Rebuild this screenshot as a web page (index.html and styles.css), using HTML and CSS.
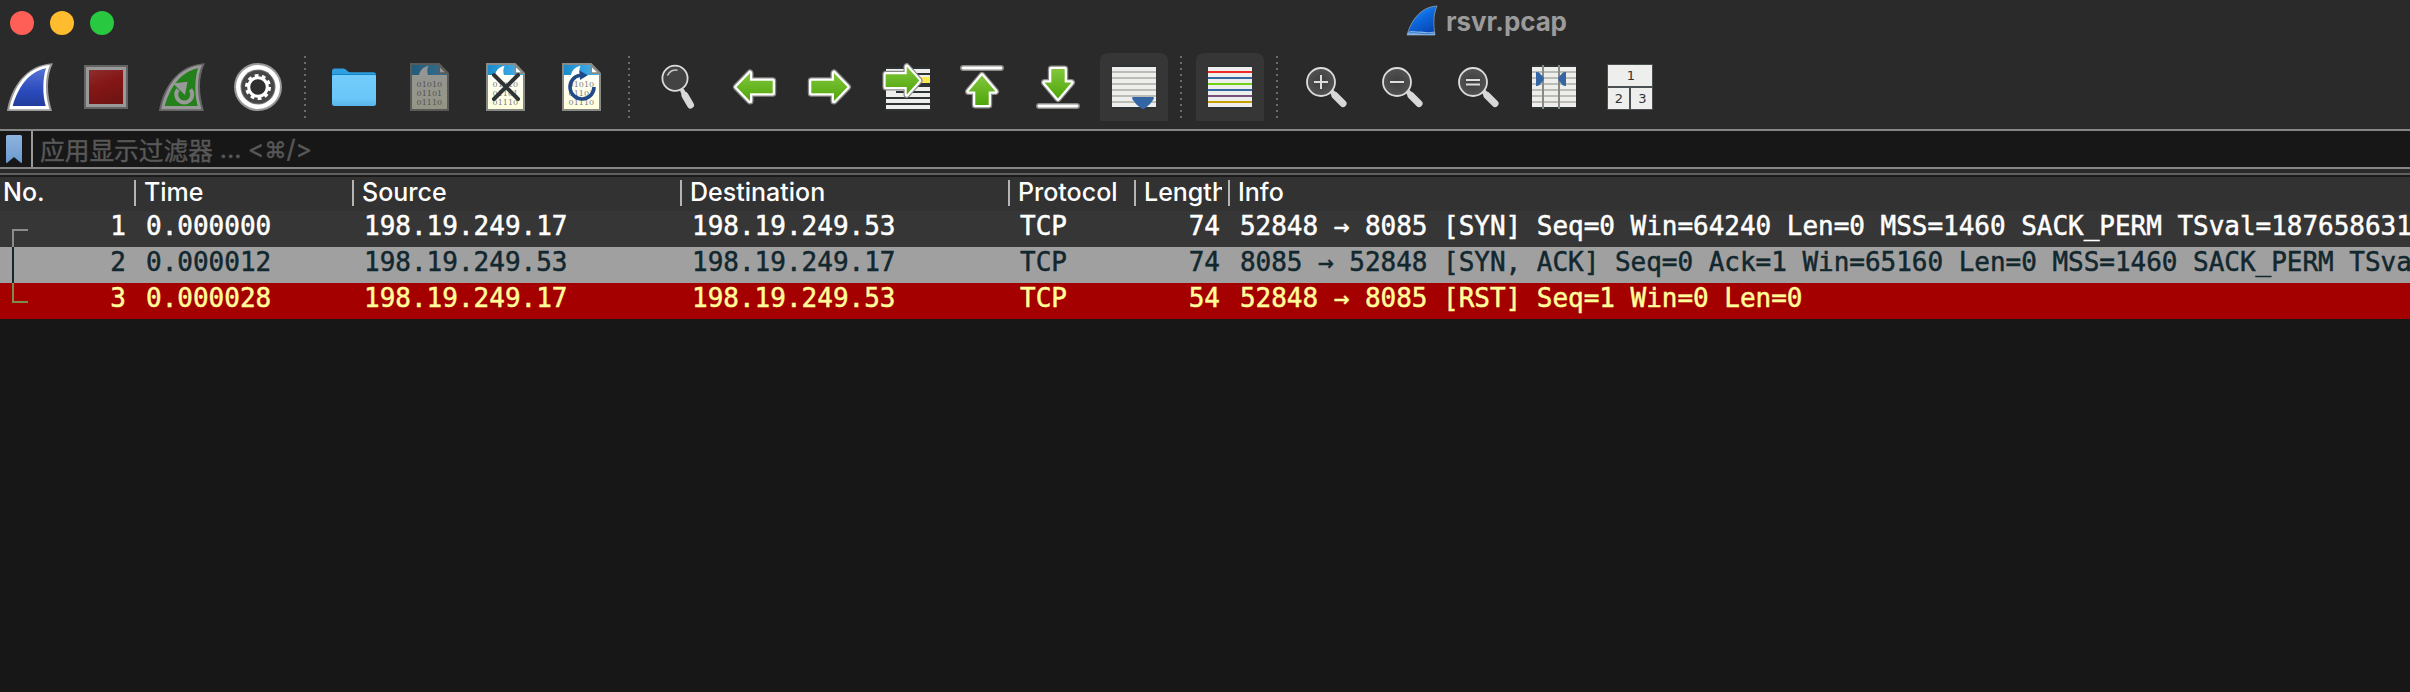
FILE: index.html
```html
<!DOCTYPE html>
<html lang="zh-CN">
<head>
<meta charset="utf-8">
<title>rsvr.pcap</title>
<link rel="stylesheet" href="styles.css">
</head>
<body>
<svg class="defs" width="0" height="0" aria-hidden="true">
  <defs>
    <linearGradient id="blue" x1="0" y1="0" x2="0" y2="1"><stop offset="0" stop-color="#5672d6"/><stop offset=".6" stop-color="#2b4bbd"/><stop offset="1" stop-color="#223c9c"/></linearGradient>
    <linearGradient id="title-blue" x1="0" y1="0" x2=".6" y2="1"><stop offset="0" stop-color="#3f9df5"/><stop offset=".5" stop-color="#0c6be0"/><stop offset="1" stop-color="#0846b4"/></linearGradient>
    <linearGradient id="red" x1="0" y1="0" x2=".4" y2="1"><stop offset="0" stop-color="#8c2f2f"/><stop offset=".5" stop-color="#851616"/><stop offset="1" stop-color="#731414"/></linearGradient>
    <linearGradient id="green" x1="0" y1="0" x2="0" y2="1"><stop offset="0" stop-color="#82c63c"/><stop offset="1" stop-color="#4ea60a"/></linearGradient>
    <linearGradient id="folder" x1="0" y1="0" x2="0" y2="1"><stop offset="0" stop-color="#72cdfb"/><stop offset=".75" stop-color="#6ac6f8"/><stop offset="1" stop-color="#58b4ea"/></linearGradient>
    <linearGradient id="sky" x1="0" y1="0" x2="1" y2="0"><stop offset="0" stop-color="#1c8bcb"/><stop offset="1" stop-color="#45b5f0"/></linearGradient>
    <linearGradient id="paper" x1="0" y1="0" x2="0" y2="1"><stop offset="0" stop-color="#ffffff"/><stop offset="1" stop-color="#ffffdf"/></linearGradient>
    <linearGradient id="mark" x1="0" y1="0" x2="0" y2="1"><stop offset="0" stop-color="#8db3de"/><stop offset="1" stop-color="#6c9bd0"/></linearGradient>
    <radialGradient id="lens"><stop offset="0" stop-color="#3e3e3e"/><stop offset="1" stop-color="#525252"/></radialGradient>
    <g id="sheet">
      <path d="M4 0H33.5L43 10V48H4Z" fill="#888a85"/>
      <path d="M6 2H32.5L41 10.5V46H6Z" fill="url(#paper)"/>
      <path d="M6 2H32.5L41 10.500V12H6Z" fill="url(#sky)"/>
      <path d="M13 12C14 7 18 3.5 22.5 3C21 6 21 9 22 12Z" fill="#fff"/>
      <path d="M32.5 1L42.500 11H32.5Z" fill="#888a85"/>
      <path d="M34 4.500V9.300H39Z" fill="#fff"/>
      <g class="bits"><text x="10.600" y="24" textLength="25.500">01010</text><text x="10.600" y="33" textLength="25.500">01101</text><text x="10.600" y="42" textLength="25.500">01110</text></g>
    </g>
    <path id="arrow" d="M41.500 24L28 10V17.700H5.300V30.300H28V38Z" stroke-linejoin="round"/>
    <g id="green-arrow"><use href="#arrow" fill="#888a85" stroke="#888a85" stroke-width="7"/><use href="#arrow" fill="#fff" stroke="#fff" stroke-width="4.500"/><use href="#arrow" fill="url(#green)"/></g>
    <path id="up" d="M24 12.500L37.500 28.500H30.700V42H17.300V28.500H10.500Z" stroke-linejoin="round"/>
    <path id="down" d="M24 35.500L37.500 19.500H30.700V6H17.300V19.500H10.500Z" stroke-linejoin="round"/>
    <g id="glass">
      <path d="M30.500 29.500L32.500 31.500" stroke="#d8d8d8" stroke-width="5" stroke-linecap="round"/>
      <path d="M33 32.500L41 40.500" stroke="#d8d8d8" stroke-width="7" stroke-linecap="round"/>
      <circle cx="19" cy="19" r="14" fill="url(#lens)" stroke="#dcdcdc" stroke-width="1.800"/>
    </g>
    <g id="lines"><path d="M2 2H46V46H2Z" fill="#2e3436"/><path d="M2 4H46V44H2Z" fill="#eeeeec"/></g>
    <path id="rules" d="M2 9H46M2 15H46M2 21H46M2 27H46M2 33H46M2 39H46" stroke="#babdb6" stroke-width="2"/>
  </defs>
</svg>

<div class="window">
  <header class="titlebar">
    <span class="light close"></span><span class="light minimize"></span><span class="light zoom"></span>
    <div class="title">
      <svg width="32" height="32" viewBox="0 0 32 32"><path d="M1 30C5 16 14 2 31 1C27 10 27.500 20 29 30Z" fill="url(#title-blue)" stroke="#8d9aa3" stroke-width=".8"/><path d="M1.500 29C3 24.500 7 26.500 12 26.500S22 28 28.500 26.500L29 30H1Z" fill="#86b3e6"/><path d="M3 28C9 26.500 16 30 28 28" fill="none" stroke="#2b6cc4" stroke-width=".8"/></svg>
      <span>rsvr.pcap</span>
    </div>
  </header>

  <nav class="toolbar">
    <div class="tool"><svg viewBox="0 0 48 48"><path d="M1 48C5 24 20 1.500 47 .3C40 14 41 32 46 48Z" fill="#999"/><path d="M3.200 46.300C8 24 20 4 44 2C38.500 14 39 32 43.500 46.300Z" fill="#fff"/><path d="M6.700 43C12 25 22 9 40 5.300C36.500 16 36.500 32 39.700 43Z" fill="url(#blue)"/></svg></div>
    <div class="tool"><svg viewBox="0 0 48 48"><path d="M2 2H46V46H2Z" fill="#646464"/><path d="M4 4H44V44H4Z" fill="#999"/><path d="M7 7H41V41H7Z" fill="url(#red)"/></svg></div>
    <div class="tool"><svg viewBox="0 0 48 48"><path d="M1 48C5 24 20 1.500 47 .3C40 14 41 32 46 48Z" fill="#646464"/><path d="M3.200 46.300C8 24 20 4 44 2C38.500 14 39 32 43.500 46.300Z" fill="#999"/><path d="M6.700 43C12 25 22 9 40 5.300C36.500 16 36.500 32 39.700 43Z" fill="#24801a"/><path d="M20 26.500A8 8 0 1 0 32.500 26.500" fill="none" stroke="#999" stroke-width="4"/><path d="M15 20.500L29.500 18.800L27 32Z" fill="#999"/></svg></div>
    <div class="tool"><svg viewBox="0 0 48 48"><circle cx="24" cy="24" r="24" fill="#999"/><circle cx="24" cy="24" r="22" fill="#fff"/><circle cx="24" cy="24" r="17.500" fill="#777"/><circle cx="24" cy="24" r="16.500" fill="#464646"/><circle cx="24" cy="24" r="9.300" fill="#2e2e2e" stroke="#fff" stroke-width="3"/><circle cx="24" cy="24" r="11.500" fill="none" stroke="#fff" stroke-width="3" stroke-dasharray="3.800 3.426"/></svg></div>
    <i class="divider"></i>
    <div class="tool"><svg viewBox="0 0 48 48"><path d="M2 8Q2 5.500 4.500 5.500H13.500Q15 5.500 16.500 7L18 8.500Q19 9.300 20.500 9.300H43.500Q46 9.300 46 12V20H2Z" fill="#2f9fdf"/><path d="M2 11H46V16H2Z" fill="#0f83cb"/><path d="M2 13Q2 12 3.500 12H44.500Q46 12 46 13V40.500Q46 43 43.500 43H4.500Q2 43 2 40.500Z" fill="url(#folder)"/></svg></div>
    <div class="tool"><svg class="disabled" viewBox="0 0 48 48"><use href="#sheet"/></svg></div>
    <div class="tool"><svg viewBox="0 0 48 48"><use href="#sheet"/><path d="M12 12L36 36M36 12L12 36" stroke="#2e3436" stroke-width="4" stroke-linecap="round"/></svg></div>
    <div class="tool"><svg viewBox="0 0 48 48"><use href="#sheet"/><path d="M36 24A12 12 0 1 1 22 12.200" fill="none" stroke="#204a87" stroke-width="3.600"/><path d="M21.500 7.500L29.800 12.300L22 17Z" fill="#204a87"/></svg></div>
    <i class="divider"></i>
    <div class="tool"><svg viewBox="0 0 48 48"><path d="M28.500 28L30 31" stroke="#d8d8d8" stroke-width="4.500" stroke-linecap="round"/><path d="M31 32.500L36.500 42" stroke="#d8d8d8" stroke-width="7" stroke-linecap="round"/><circle cx="21" cy="15.300" r="12.600" fill="#434343" stroke="#dcdcdc" stroke-width="1.800"/><path d="M13.500 12.500A8.500 8.500 0 0 1 23.500 7.200" fill="none" stroke="#c8c8c8" stroke-width="1.600"/></svg></div>
    <div class="tool"><svg viewBox="0 0 48 48"><g transform="matrix(-1 0 0 1 48 0)"><use href="#green-arrow"/></g></svg></div>
    <div class="tool"><svg viewBox="0 0 48 48"><use href="#green-arrow"/></svg></div>
    <div class="tool"><svg viewBox="0 0 48 48"><path d="M4 4H48V48H4Z" fill="#2e3436"/><path d="M4 8H48M4 26H48M4 32H48M4 38H48M4 44H48" stroke="#eeeeec" stroke-width="4"/><path d="M4 12H48" stroke="#eeeeec" stroke-width="0"/><path d="M4 28H14V34H4Z" fill="#eeeeec"/><path d="M24 12H48V14H24Z" fill="#eeeeec"/><path d="M24 14H48V20H24Z" fill="#fce94f"/><g transform="translate(-1.300 -6.400) scale(.93 1)"><use href="#green-arrow"/></g></svg></div>
    <div class="tool"><svg viewBox="0 0 48 48"><path d="M5 5H43" stroke="#888a85" stroke-width="6" stroke-linecap="round"/><path d="M5 5H43" stroke="#fff" stroke-width="2.800" stroke-linecap="round"/><use href="#up" fill="none" stroke="#888a85" stroke-width="7"/><use href="#up" fill="none" stroke="#fff" stroke-width="4.500"/><use href="#up" fill="url(#green)"/></svg></div>
    <div class="tool"><svg viewBox="0 0 48 48"><path d="M5 43H43" stroke="#888a85" stroke-width="6" stroke-linecap="round"/><path d="M5 43H43" stroke="#fff" stroke-width="2.800" stroke-linecap="round"/><use href="#down" fill="none" stroke="#888a85" stroke-width="7"/><use href="#down" fill="none" stroke="#fff" stroke-width="4.500"/><use href="#down" fill="url(#green)"/></svg></div>
    <div class="tool active"><svg viewBox="0 0 48 48"><use href="#lines"/><use href="#rules"/><path d="M23 34H43Q44.500 34 43.700 36Q41 41 35 45.300Q33 46.500 31 45.300Q25 41 22.300 36Q21.500 34 23 34Z" fill="#3465a4"/></svg></div>
    <i class="divider"></i>
    <div class="tool active"><svg viewBox="0 0 48 48"><use href="#lines"/><g stroke-width="2"><path d="M2 9H46" stroke="#ef2929"/><path d="M2 15H46" stroke="#3465a4"/><path d="M2 21H46" stroke="#73d216"/><path d="M2 27H46" stroke="#3465a4"/><path d="M2 33H46" stroke="#75507b"/><path d="M2 39H46" stroke="#c4a000"/></g></svg></div>
    <i class="divider"></i>
    <div class="tool"><svg viewBox="0 0 48 48"><use href="#glass"/><path d="M12 19H26M19 12V26" stroke="#dcdcdc" stroke-width="2"/></svg></div>
    <div class="tool"><svg viewBox="0 0 48 48"><use href="#glass"/><path d="M12 19H26" stroke="#dcdcdc" stroke-width="2"/></svg></div>
    <div class="tool"><svg viewBox="0 0 48 48"><use href="#glass"/><path d="M12 17H26M12 21.500H26" stroke="#dcdcdc" stroke-width="2"/></svg></div>
    <div class="tool"><svg viewBox="0 0 48 48"><use href="#lines"/><use href="#rules"/><path d="M13 2V46M29 2V46" stroke="#888a85" stroke-width="2"/><path d="M6 9Q8 8.500 9.500 10L13.300 14Q14.600 15.800 13.300 17.600L9.500 22Q8 23.300 6 23Z M36 9Q34 8.500 32.500 10L28.700 14Q27.400 15.800 28.700 17.600L32.500 22Q34 23.300 36 23Z" fill="#3465a4"/></svg></div>
    <div class="tool"><svg viewBox="0 0 48 48"><path d="M1 1H47V47H1Z" fill="#4a4f52"/><path d="M2 2H46V23H2ZM2 25H23V46H2ZM25 25H46V46H25Z" fill="#eeeeec"/><g class="panes"><text x="25" y="17">1</text><text x="13" y="40">2</text><text x="36.500" y="40">3</text></g></svg></div>
  </nav>

  <div class="filter">
    <div class="bookmark"><svg width="16" height="28" viewBox="0 0 16 28"><path d="M1.500 0H14.500Q16 0 16 1.500V27Q16 28.500 14.500 27.500L8 22L1.500 27.500Q0 28.500 0 27V1.500Q0 0 1.500 0Z" fill="url(#mark)"/></svg></div>
    <div class="placeholder"><span class="cjk">应用显示过滤器</span><span class="dots">...</span><span class="keys">&lt;<span class="cmd">⌘</span>/&gt;</span></div>
  </div>

  <main class="packets">
    <div class="row head"><div>No.</div><div>Time</div><div>Source</div><div>Destination</div><div>Protocol</div><div><span class="clip">Length</span></div><div>Info</div></div>
    <div class="row syn"><div class="num"><i class="link first"></i>1</div><div>0.000000</div><div>198.19.249.17</div><div>198.19.249.53</div><div>TCP</div><div class="len">74</div><div>52848 → 8085 [SYN] Seq=0 Win=64240 Len=0 MSS=1460 SACK_PERM TSval=187658631</div></div>
    <div class="row ack"><div class="num"><i class="link mid"></i>2</div><div>0.000012</div><div>198.19.249.53</div><div>198.19.249.17</div><div>TCP</div><div class="len">74</div><div>8085 → 52848 [SYN, ACK] Seq=0 Ack=1 Win=65160 Len=0 MSS=1460 SACK_PERM TSva</div></div>
    <div class="row rst"><div class="num"><i class="link last"></i>3</div><div>0.000028</div><div>198.19.249.17</div><div>198.19.249.53</div><div>TCP</div><div class="len">54</div><div>52848 → 8085 [RST] Seq=1 Win=0 Len=0</div></div>
  </main>
</div>
</body>
</html>
```
FILE: styles.css
```css
* { box-sizing: border-box; }
body { margin: 0; background: #171717; }
.defs { display: block; position: absolute; }
.window { width: 2410px; height: 692px; overflow: hidden; background: #171717; }

.titlebar { display: flex; align-items: center; height: 46px; padding-left: 10px; gap: 16px; background: #2a2a2a; }
.light { width: 24px; height: 24px; border-radius: 50%; }
.close { background: #ff5f57; }
.minimize { background: #febc2e; }
.zoom { background: #28c840; }
.title { display: flex; align-items: center; gap: 8px; margin-left: 1276px; margin-top: -4px; color: #9b9b9b; font: 700 26px/32px Inter, sans-serif; letter-spacing: -.1px; }
.title span { padding-top: 1px; }

.toolbar { display: flex; align-items: center; height: 83px; padding-bottom: 1px; background: #2a2a2a; }
.tool { flex: none; width: 68px; height: 68px; margin: 0 4px; display: flex; align-items: center; justify-content: center; }
.tool:first-child { margin-left: -4px; }
.tool svg { width: 48px; height: 48px; }
.active { background: #363636; border-radius: 8px 8px 0 0; }
.disabled { opacity: .5; }
.divider { flex: none; width: 2px; height: 62px; margin: 0 10px 0 8px; background: repeating-linear-gradient(#6b6b6b 0 2px, transparent 2px 6px); }
.bits { font: 8px "DejaVu Serif", serif; fill: #808080; }
.panes { font: 13px "DejaVu Sans", sans-serif; fill: #2e3436; text-anchor: middle; }

.filter { display: flex; height: 40px; border-top: 2px solid #868686; border-bottom: 2px solid #868686; background: #171717; }
.bookmark { width: 33px; padding: 4px 0 0 6px; border-right: 2px solid #9a9a9a; }
.bookmark svg { display: block; }
.placeholder { display: flex; padding-left: 7px; color: #585858; line-height: 36px; white-space: pre; -webkit-text-stroke: .4px #585858; }
.cjk { font-family: "Noto Sans CJK SC", sans-serif; font-size: 24.7px; margin-top: 0; }
.dots { margin-left: 7px; font: 25px/36px Inter, sans-serif; width: 28px; }
.keys { font: 25px/36px Inter, sans-serif; }
.cmd { font: 22px/34px "DejaVu Sans", sans-serif; }

.packets { border-top: 4px solid #2a2a2a; }
.row { display: grid; grid-template-columns: 136px 218px 328px 328px 126px 94px 1180px; height: 36px; color: #fff; font: 26px/36px "DejaVu Sans Mono", monospace; white-space: pre; overflow: hidden; -webkit-text-stroke: .5px currentColor; }
.row > div { padding-left: 10px; line-height: 31px; }
.row > div:last-child { padding-left: 10px; letter-spacing: -.03px; }
.row .num { display: flex; justify-content: space-between; padding: 0 10px 0 12px; }
.row .len { text-align: right; padding-right: 10px; }
.head { height: 38px; padding-top: 5px; border-top: 2px solid #606060; background: #323232; box-shadow: inset 0 2px #1a1a1a; font: 500 25px/26px Inter, sans-serif; -webkit-text-stroke: 0; }
.row.head > div { height: 26px; line-height: 25px; padding-left: 8px; border-right: 2px solid #b4b4b4; }
.row.head > div:first-child { padding-left: 3px; }
.row.head > div:last-child { border: 0; letter-spacing: 0; }
.clip { display: block; width: 78px; height: 31px; overflow: hidden; }
.syn { background: #363636; }
.ack { background: #a0a0a0; color: #12272e; }
.rst { background: #a40000; color: #fffc9c; }
.link { width: 16px; }
.first { height: 18px; margin-top: 18px; border-left: 2px solid #8b8b8b; border-top: 2px solid #8b8b8b; }
.mid { height: 36px; border-left: 2px solid #12272e; }
.last { height: 20px; border-left: 2px solid #7e8b4e; border-bottom: 2px solid #7e8b4e; }
```
